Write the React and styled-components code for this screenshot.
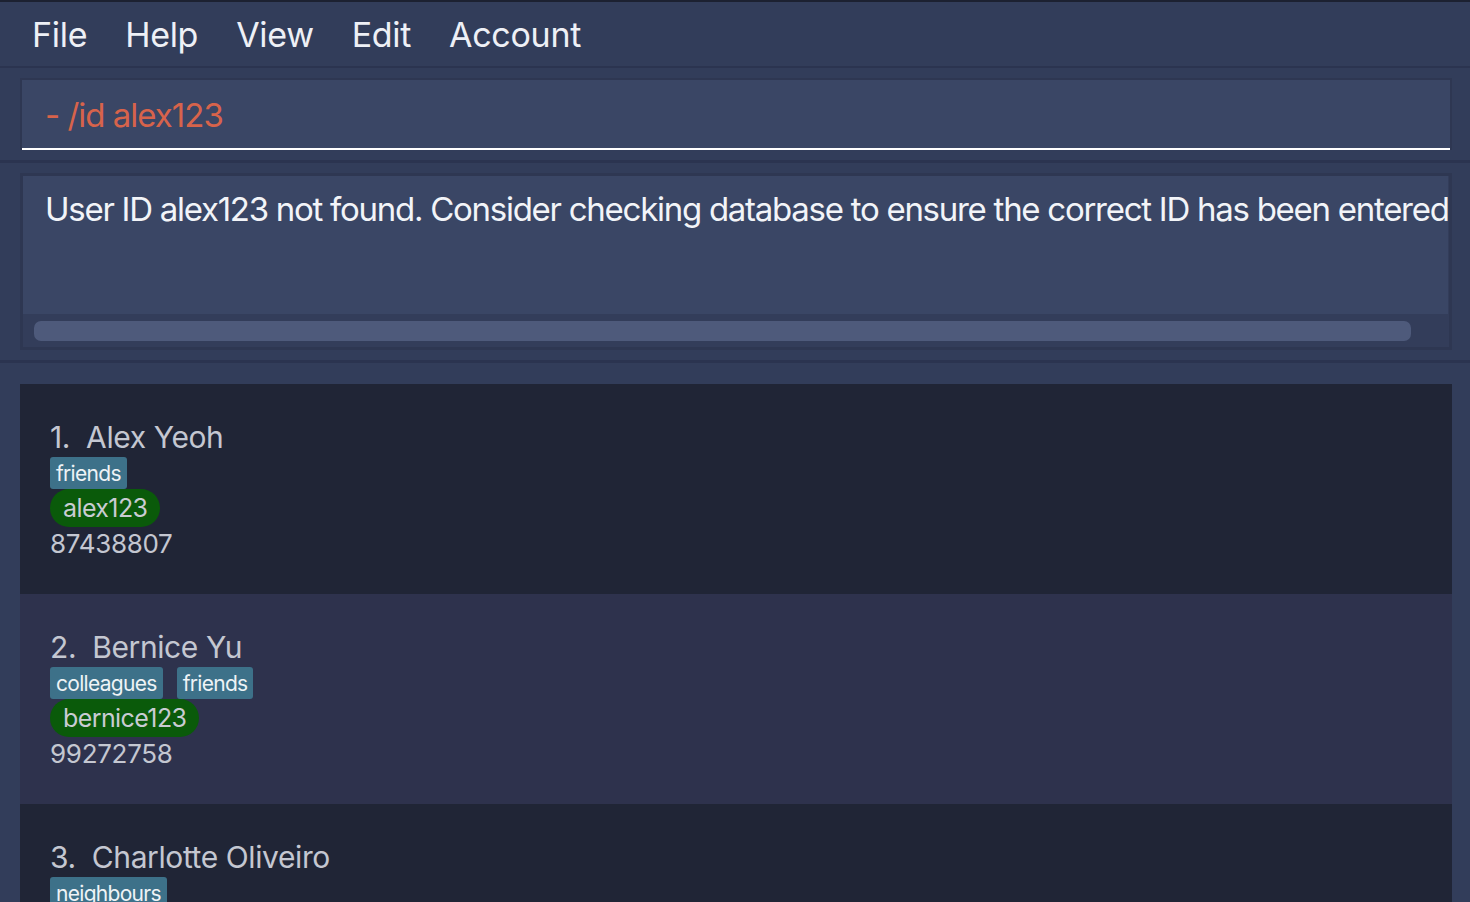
import React from 'react';
import styled, { createGlobalStyle } from 'styled-components';

const GlobalStyle = createGlobalStyle`
  html, body {
    margin: 0;
    padding: 0;
    background: #323d5a;
    overflow: hidden;
  }

  body {
    font-family: Inter, "Noto Sans", "Liberation Sans", sans-serif;
  }
`;

const Window = styled.div`
  width: 1470px;
  height: 902px;
  display: flex;
  flex-direction: column;
  background: #323d5a;
  border-top: 2px solid #1c2131;
  box-sizing: border-box;
  overflow: hidden;
`;

const MenuBar = styled.nav`
  display: flex;
  align-items: center;
  height: 64px;
  padding-left: 13px;
  border-bottom: 2px solid #2b3450;
`;

const MenuItem = styled.span`
  padding: 0 19px;
  font-size: 34px;
  letter-spacing: -0.3px;
  color: #eef0f6;
`;

const Section = styled.section`
  padding: 10px 18px 10px 20px;
  border-bottom: 3px solid #2b3450;
`;

const CommandBox = styled.div`
  height: 70px;
  display: flex;
  align-items: center;
  padding: 0 23px;
  background: #3a4665;
  border: 2px solid #2e3752;
  border-bottom: none;
  box-shadow: inset 0 -2px 0 #ffffff;
`;

const CommandText = styled.span`
  font-size: 33px;
  letter-spacing: -1px;
  color: #d7634b;
`;

const ResultBox = styled.div`
  display: flex;
  flex-direction: column;
  border: 3px solid #2e3752;
  background: #333d5a;
`;

const ResultText = styled.div`
  height: 138px;
  margin-right: 1px;
  padding: 13px 0 0 22px;
  box-sizing: border-box;
  background: #3a4665;
  font-size: 33px;
  letter-spacing: -1.27px;
  white-space: nowrap;
  overflow: hidden;
  color: #f2f4f8;
`;

const ScrollTrack = styled.div`
  height: 33px;
  display: flex;
  align-items: center;
  padding: 0 38px 0 11px;
`;

const ScrollThumb = styled.div`
  flex: 1;
  height: 20px;
  border-radius: 7px;
  background: #4e5a7b;
`;

const ListSection = styled.section`
  flex: 1;
  padding: 21px 18px 0 20px;
  overflow: hidden;
`;

const Card = styled.article`
  height: 210px;
  box-sizing: border-box;
  padding: 35px 30px 0;
  background: ${props => (props.alt ? '#2e324d' : '#202536')};
`;

const CardBody = styled.div`
  display: flex;
  flex-direction: column;
`;

const Name = styled.div`
  font-size: 30px;
  line-height: 36px;
  letter-spacing: -0.4px;
  color: #c4c7d1;
`;

const TagRow = styled.div`
  display: flex;
  gap: 14px;
  margin-top: 2px;
`;

const Tag = styled.span`
  height: 32px;
  padding: 0 6px;
  display: flex;
  align-items: center;
  border-radius: 3px;
  background: #3d7189;
  font-size: 21px;
  letter-spacing: -0.7px;
  color: #eef3f6;
`;

const IdPill = styled.span`
  align-self: flex-start;
  height: 38px;
  padding: 0 13px;
  display: inline-flex;
  align-items: center;
  border-radius: 19px;
  background: #0a5a0a;
  font-size: 25px;
  letter-spacing: -0.6px;
  color: #c9ccd3;
`;

const Phone = styled.div`
  margin-top: 2px;
  font-size: 26px;
  line-height: 30px;
  letter-spacing: -0.3px;
  color: #c4c7d1;
`;

const menus = ['File', 'Help', 'View', 'Edit', 'Account'];

const persons = [
  { name: 'Alex Yeoh', tags: ['friends'], id: 'alex123', phone: '87438807' },
  { name: 'Bernice Yu', tags: ['colleagues', 'friends'], id: 'bernice123', phone: '99272758' },
  { name: 'Charlotte Oliveiro', tags: ['neighbours'], id: 'charlotte123', phone: '93210283' }
];

const PersonCard = ({ index, person }) => (
  <Card alt={index % 2 === 1}>
    <CardBody>
      <Name>{`${index + 1}.\u00a0\u00a0${person.name}`}</Name>
      <TagRow>
        {person.tags.map(tag => (
          <Tag key={tag}>{tag}</Tag>
        ))}
      </TagRow>
      <IdPill>{person.id}</IdPill>
      <Phone>{person.phone}</Phone>
    </CardBody>
  </Card>
);

const App = () => (
  <Window>
    <GlobalStyle />
    <MenuBar>
      {menus.map(m => (
        <MenuItem key={m}>{m}</MenuItem>
      ))}
    </MenuBar>
    <Section>
      <CommandBox>
        <CommandText>- /id alex123</CommandText>
      </CommandBox>
    </Section>
    <Section>
      <ResultBox>
        <ResultText>
          User ID alex123 not found. Consider checking database to ensure the correct ID has been entered
        </ResultText>
        <ScrollTrack>
          <ScrollThumb />
        </ScrollTrack>
      </ResultBox>
    </Section>
    <ListSection>
      {persons.map((p, i) => (
        <PersonCard key={p.id} index={i} person={p} />
      ))}
    </ListSection>
  </Window>
);

export default App;
